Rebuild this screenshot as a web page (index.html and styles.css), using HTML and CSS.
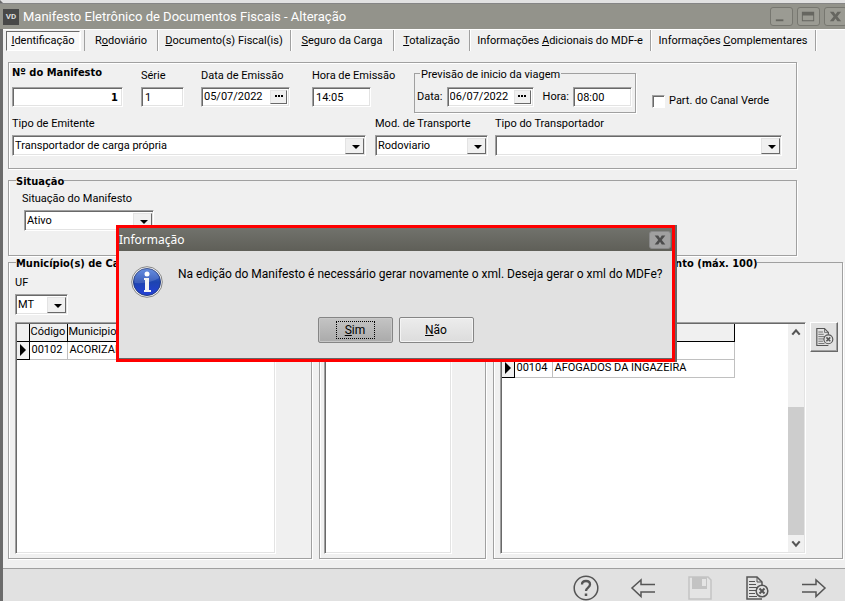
FILE: index.html
```html
<!DOCTYPE html>
<html lang="pt-BR">
<head>
<meta charset="utf-8">
<meta name="viewport" content="width=device-width, initial-scale=1">
<title>Manifesto Eletrônico de Documentos Fiscais</title>
<link rel="stylesheet" href="styles.css">
</head>
<body>
<svg class="defs" aria-hidden="true">
  <symbol id="doc-cancel" viewBox="0 0 24 26">
    <path d="M17 10V7l-5-5H2v22h15" fill="none" stroke="currentColor" stroke-width="1.500"/>
    <path d="M12 2v5h5" fill="none" stroke="currentColor" stroke-width="1"/>
    <path d="M4 6.500h6M4 9.500h7M4 12.500h9M4 15.500h7M4 18.500h6M4 21.500h8" stroke="currentColor" stroke-width="1"/>
    <circle cx="17" cy="16" r="5.800" fill="#e1e1e1" stroke="currentColor" stroke-width="1.500"/>
    <path d="M14.500 13.500l5 5m0-5l-5 5" stroke="currentColor" stroke-width="2"/>
  </symbol>
</svg>
<div class="window">
  <header class="titlebar">
    <span class="app-icon">VD</span>
    <h1>Manifesto Eletrônico de Documentos Fiscais - Alteração</h1>
    <div class="window-buttons">
      <button type="button" aria-label="Minimizar"><svg viewBox="0 0 22 18"><path d="M5 12h8v2H5z" fill="#666660"/></svg></button>
      <button type="button" aria-label="Maximizar"><svg viewBox="0 0 22 18"><path d="M4 4h13v10H4zM5 8v5h11V8z" fill="#666660" fill-rule="evenodd"/></svg></button>
      <button type="button" aria-label="Fechar"><svg viewBox="0 0 22 18"><path d="M5 4h4l2 3 2-3h4l-4 5 4 5h-4l-2-3-2 3H5l4-5z" fill="#666660"/></svg></button>
    </div>
  </header>

  <nav class="tabs" aria-label="Seções">
    <button type="button" class="tab selected"><u>I</u>dentificação</button>
    <button type="button" class="tab">R<u>o</u>doviário</button>
    <button type="button" class="tab"><u>D</u>ocumento(s) Fiscal(is)</button>
    <button type="button" class="tab"><u>S</u>eguro da Carga</button>
    <button type="button" class="tab"><u>T</u>otalização</button>
    <button type="button" class="tab">Informações <u>A</u>dicionais do MDF-e</button>
    <button type="button" class="tab">Informações <u>C</u>omplementares</button>
  </nav>

  <main>
    <section class="panel">
      <div class="row first">
        <div class="field number"><label class="strong" for="num">Nº do Manifesto</label><input class="box" id="num" value="1"></div>
        <div class="field serie"><label for="serie">Série</label><input class="box" id="serie" value="1"></div>
        <div class="field date-field"><label for="data">Data de Emissão</label>
          <span class="box date"><input id="data" value="05/07/2022"><button type="button" aria-label="Escolher data"><i></i></button></span></div>
        <div class="field hour-field"><label for="hora">Hora de Emissão</label><input class="box" id="hora" value="14:05"></div>
        <fieldset class="forecast">
          <legend>Previsão de inicio da viagem</legend>
          <label for="pdata">Data:</label>
          <span class="box date"><input id="pdata" value="06/07/2022"><button type="button" aria-label="Escolher data"><i></i></button></span>
          <label for="phora">Hora:</label>
          <input class="box" id="phora" value="08:00">
        </fieldset>
        <label class="check"><input type="checkbox">Part. do Canal Verde</label>
      </div>
      <div class="row second">
        <div class="field emitter"><label for="emit">Tipo de Emitente</label><span class="box combo"><select id="emit"><option>Transportador de carga própria</option></select></span></div>
        <div class="field mode"><label for="modo">Mod. de Transporte</label><span class="box combo"><select id="modo"><option>Rodoviario</option></select></span></div>
        <div class="field carrier"><label for="transp">Tipo do Transportador</label><span class="box combo"><select id="transp"><option></option></select></span></div>
      </div>
    </section>

    <fieldset class="group status">
      <legend>Situação</legend>
      <label for="sit">Situação do Manifesto</label>
      <span class="box combo"><select id="sit"><option>Ativo</option></select></span>
    </fieldset>

    <div class="cities">
      <fieldset class="group loading">
        <legend>Município(s) de Carga</legend>
        <label for="uf">UF</label>
        <span class="box combo"><select id="uf"><option>MT</option></select></span>
        <div class="box list">
          <table>
            <colgroup><col class="c-mark"><col class="c-code"><col class="c-name"></colgroup>
            <thead><tr><th></th><th>Código</th><th>Municipio</th></tr></thead>
            <tbody><tr><td class="mark current"></td><td>00102</td><td>ACORIZAL</td></tr></tbody>
          </table>
        </div>
      </fieldset>
      <section class="group route">
        <div class="box list"></div>
      </section>
      <fieldset class="group unloading">
        <legend>Município(s) de Descarregamento (máx. 100)</legend>
        <div class="unloading-body">
          <div class="box list">
            <table>
              <colgroup><col class="c-mark"><col class="c-code"><col class="c-name"></colgroup>
              <thead><tr><th></th><th>Código</th><th>Municipio</th></tr></thead>
              <tbody>
                <tr><td class="mark"></td><td>00103</td><td>AFRANIO</td></tr>
                <tr><td class="mark current"></td><td>00104</td><td>AFOGADOS DA INGAZEIRA</td></tr>
              </tbody>
            </table>
            <div class="scroll" aria-hidden="true">
              <svg viewBox="0 0 15 16"><path d="M4 10l3.500-4 3.500 4" fill="none" stroke="#555" stroke-width="2"/></svg>
              <div class="track"><span class="thumb"></span></div>
              <svg viewBox="0 0 15 16"><path d="M4 6l3.500 4 3.500-4" fill="none" stroke="#555" stroke-width="2"/></svg>
            </div>
          </div>
          <button type="button" class="remove" aria-label="Excluir município"><svg><use href="#doc-cancel"/></svg></button>
        </div>
      </fieldset>
    </div>
  </main>

  <footer class="toolbar">
    <button type="button" aria-label="Ajuda"><svg viewBox="0 0 26 26" fill="none" stroke="currentColor"><circle cx="13" cy="13" r="11.800" stroke-width="1.500"/><path d="M9 9.500C9 7 10.800 6 13 6s4 1.300 4 3.500c0 3-4 3.200-4 6.500" stroke-width="2.300"/><path d="M13 18.500V21" stroke-width="2.500"/></svg></button>
    <button type="button" aria-label="Anterior"><svg viewBox="0 0 26 26" fill="none" stroke="currentColor" stroke-width="1.500"><path d="M25 9.500H11V5L2 13l9 8.500V17h14"/></svg></button>
    <button type="button" aria-label="Salvar" disabled><svg viewBox="0 0 26 26"><path d="M2 2h19l3 3v19H2z" fill="#e4e4e4" stroke="#c3c3c3" stroke-width="1.500"/><path d="M5 2h15v12H5z" fill="#c3c3c3"/><path d="M15 4h4v7h-4z" fill="#e4e4e4"/></svg></button>
    <button type="button" aria-label="Cancelar"><svg><use href="#doc-cancel"/></svg></button>
    <button type="button" aria-label="Próximo"><svg viewBox="0 0 26 26" fill="none" stroke="currentColor" stroke-width="1.500"><path d="M1 9.500h14V5l9 8-9 8.500V17H1"/></svg></button>
  </footer>
</div>

<div class="dialog" role="dialog" aria-labelledby="dlg-title">
  <div class="dialog-title">
    <h2 id="dlg-title">Informação</h2>
    <button type="button" aria-label="Fechar"><svg viewBox="0 0 22 18"><path d="M5 4h4l2 3 2-3h4l-4 5 4 5h-4l-2-3-2 3H5l4-5z" fill="#4c4c4c"/></svg></button>
  </div>
  <div class="dialog-message">
    <svg class="info" viewBox="0 0 32 32">
      <defs><linearGradient id="blue" x1="0" y1="0" x2="0" y2="1"><stop offset="0" stop-color="#4d7cdc"/><stop offset=".5" stop-color="#1d44b0"/><stop offset="1" stop-color="#2440d8"/></linearGradient></defs>
      <circle cx="16" cy="16" r="15.300" fill="#f4f4f4" stroke="#858585"/>
      <circle cx="16" cy="16" r="13.500" fill="url(#blue)" stroke="#253c80"/>
      <path d="M3.500 17A12.500 12.500 0 0 1 28 12Q19 18 3.500 17z" fill="#fff" opacity=".15"/>
      <circle cx="16" cy="8" r="2.500" fill="#fff"/>
      <path d="M13 12h5v12h2v2h-7v-2h1V14h-1z" fill="#f4f4f4"/>
    </svg>
    <p>Na edição do Manifesto é necessário gerar novamente o xml. Deseja gerar o xml do MDFe?</p>
  </div>
  <div class="dialog-actions">
    <button type="button" class="default"><span><u>S</u>im</span></button>
    <button type="button"><span><u>N</u>ão</span></button>
  </div>
</div>
</body>
</html>
```
FILE: styles.css
```css
* { box-sizing: border-box; }
body {
  margin: 0;
  background: #f0f0f0;
  color: #000;
  font: 11px/14px Roboto, "Noto Sans", sans-serif;
}
button, input, select { font: inherit; color: inherit; margin: 0; padding: 0; border: 0; border-radius: 0; }
fieldset { margin: 0; padding: 0; border: 0; min-width: 0; }
u { text-underline-offset: 1px; }
.defs { position: absolute; width: 0; height: 0; }

.window {
  display: flex;
  flex-direction: column;
  min-height: 100vh;
  border-top: 3px solid #e1e1e1;
  border-left: 3px solid #6b6b6b;
}
.titlebar {
  display: flex;
  align-items: center;
  height: 26px;
  margin-left: -3px;
  padding-left: 3px;
  background: #93938b;
  border-top: 1px solid #858585;
}
.app-icon {
  width: 16px;
  height: 16px;
  background: #484848;
  color: #ddd;
  font-size: 8px;
  font-weight: bold;
  line-height: 16px;
  text-align: center;
}
.titlebar h1 { flex: 1; margin: 0 0 0 4px; color: #fff; font-size: 13px; font-weight: normal; line-height: 20px; white-space: nowrap; }
.window-buttons { display: flex; gap: 4px; margin-right: -2px; }
.window-buttons button {
  width: 23px;
  height: 19px;
  background: #9b9b93;
  border: 1px solid #777770;
  border-radius: 3px;
}
.window-buttons svg, .dialog-title svg { display: block; width: 100%; height: 100%; }

.tabs {
  display: grid;
  grid-template-columns: 79px 73px 133px 103px 76px 181px 165px;
  height: 22px;
  padding-left: 3px;
  border-top: 1px solid #fff;
}
.tab { background: none; border-right: 1px solid #a0a0a0; box-shadow: 1px 0 #fff; line-height: 20px; white-space: nowrap; }
.tab.selected {
  height: 20px;
  margin: 1px 5px 0 0;
  background: #f8f8f8;
  border: 1px solid #fff;
  border-top-color: #696969;
  border-left-color: #696969;
  line-height: 18px;
}
.tab.selected + .tab { border-left: 1px solid #a0a0a0; margin-left: -1px; }

main { display: flex; flex-direction: column; flex: 1; padding: 11px 2px 9px 5px; }

.box {
  display: flex;
  background: #fff;
  border: 1px solid;
  border-color: #a0a0a0 #fff #fff #a0a0a0;
  box-shadow: inset 1px 1px #696969, inset -1px -1px #e3e3e3;
  padding: 2px;
}
input.box { width: 100%; height: 20px; padding: 0 4px 0 3px; }
.date { height: 20px; }
.date input { flex: 1; width: 0; background: none; }
.date button, .combo::before {
  width: 17px;
  background: #f0f0f0;
  border: 1px solid;
  border-color: #e3e3e3 #696969 #696969 #e3e3e3;
}
.date i { display: block; width: 8px; height: 2px; margin: -2px auto 0; background: repeating-linear-gradient(90deg, #000 0 2px, transparent 2px 3px); }
.combo { position: relative; height: 21px; }
.combo select { flex: 1; width: 0; padding: 0 18px 0 0; appearance: none; background: none; outline: 0; }
.combo::before { content: ""; position: absolute; top: 2px; right: 1px; bottom: 1px; pointer-events: none; }
.combo::after { content: ""; position: absolute; top: 9px; right: 5px; border: 4px solid transparent; border-top-color: #000; border-bottom: 0; pointer-events: none; }

.panel {
  margin-right: 46px;
  padding: 3px 14px 12px 3px;
  border: 1px solid #a0a0a0;
  box-shadow: 1px 1px #fff, inset 1px 1px #fff;
}
.row { display: flex; }
.field { display: flex; flex-direction: column; justify-content: flex-end; white-space: nowrap; }
.first { height: 48px; align-items: flex-start; }
.first .field { height: 41px; }
.first .field label { margin-bottom: 4px; }
.first .field label.strong { margin-bottom: 7px; }
.strong, .number input, .group legend { font-family: "DejaVu Sans Condensed", "DejaVu Sans", sans-serif; font-weight: bold; }
.number { width: 111px; margin-right: 18px; }
.number input { text-align: right; }
.serie { width: 43px; margin-right: 17px; }
.date-field { width: 89px; margin-right: 22px; }
.hour-field { width: 59px; margin-right: 43px; }
.hour-field label { width: max-content; }
.forecast {
  display: flex;
  align-items: center;
  width: 222px;
  height: 48px;
  margin-top: -1px;
  padding: 1px 3px 0 2px;
  border: 1px solid #a0a0a0;
  box-shadow: 1px 1px #fff;
}
.forecast legend { margin-left: 3px; padding: 4px 1px 0; line-height: 12px; }
.forecast .date { width: 87px; margin: 0 9px 0 auto; }
.forecast input.box { width: 59px; margin-left: auto; }
.check { display: flex; align-items: center; margin: 28px 0 0 16px; white-space: nowrap; }
.check input {
  appearance: none;
  width: 13px;
  height: 13px;
  margin-right: 4px;
  background: #fff;
  border: 1px solid;
  border-color: #a0a0a0 #fff #fff #a0a0a0;
  box-shadow: inset 1px 1px #696969;
}
.second { padding-top: 3px; }
.second label { margin-bottom: 4px; }
.emitter { width: 354px; margin-right: 9px; }
.mode { width: 113px; margin-right: 7px; }
.carrier { flex: 1; }

.group { border: 1px solid #a0a0a0; box-shadow: 1px 1px #fff, inset 1px 0 #fff; }
.group legend { margin-left: 7px; padding: 4px 0 0; line-height: 12px; white-space: nowrap; }
.status { height: 84px; margin: 3px 46px 0 0; padding-top: 4px; }
.status label { display: block; margin-left: 13px; }
.status .combo { width: 130px; margin: 4px 0 0 15px; }

.cities {
  display: grid;
  grid-template-columns: 304fr 167fr 350fr;
  gap: 7px;
  flex: 1;
  margin-top: -2px;
}
.cities .group { display: flex; flex-direction: column; padding-bottom: 4px; }
.list { flex: 1; align-items: flex-start; overflow: hidden; padding: 1px; }
.loading { padding-top: 6px; }
.loading label { margin-left: 6px; }
.loading .combo { width: 53px; margin: 4px 0 7px 6px; }
.loading .list { margin: 0 35px 0 6px; }
.route { margin-top: 8px; }
.route .list { margin: 59px 33px 0 4px; }
.unloading legend { margin-left: 11px; }
.unloading-body { display: flex; flex: 1; align-items: flex-start; gap: 4px; padding: 52px 4px 0 6px; }
.unloading .list { align-self: stretch; justify-content: space-between; }
.remove {
  width: 28px;
  height: 30px;
  padding: 4px;
  background: #e1e1e1;
  border: 1px solid;
  border-color: #fff #696969 #696969 #fff;
  box-shadow: inset -1px -1px #a0a0a0;
  color: #555;
}
.remove svg { display: block; width: 19px; height: 20px; }

table { border-collapse: collapse; table-layout: fixed; }
.c-mark { width: 12px; }
.c-code { width: 38px; }
.loading table { width: 220px; }
.unloading table { width: 233px; }
th, td { height: 18px; padding: 0 2px; border: 1px solid #c0c0c0; border-top: 0; border-left: 0; text-align: left; font-weight: normal; white-space: nowrap; }
th { height: 17px; background: #f0f0f0; border-color: #000; padding: 0 1px; }
td.mark { padding: 0; background: #f0f0f0; border-color: #000; }
.current::before { content: ""; display: block; width: 0; margin-left: 3px; border: 6px solid transparent; border-left-color: #000; border-right: 0; }
.scroll { display: flex; flex-direction: column; align-self: stretch; width: 16px; background: #f0f0f0; }
.scroll svg { width: 16px; height: 17px; }
.track { display: flex; flex-direction: column; justify-content: flex-end; flex: 1; }
.thumb { height: 66%; background: #cdcdcd; }

.toolbar {
  display: flex;
  justify-content: flex-end;
  gap: 31px;
  height: 33px;
  padding: 6px 18px 0 0;
  background: #e1e1e1;
  border-top: 1px solid #a0a0a0;
}
.toolbar button { width: 26px; height: 26px; background: none; color: #555; }
.toolbar svg { display: block; width: 26px; height: 26px; }

.dialog {
  position: absolute;
  top: 225px;
  left: 116px;
  width: 559px;
  background: #e1e1e1;
  border: 3px solid #f00;
  box-shadow: 2px 0 #666;
}
.dialog-title {
  display: flex;
  align-items: center;
  justify-content: space-between;
  height: 23px;
  padding-right: 1px;
  background: linear-gradient(#71726c, #5f5f58);
}
.dialog-title h2 { margin: 0; color: #fff; font: 12px/16px "Noto Sans", sans-serif; }
.dialog-title button { width: 22px; height: 18px; background: #a0a0a0; border: 1px solid #888; border-radius: 3px; }
.dialog-message { display: flex; align-items: flex-start; gap: 15px; padding: 15px 12px 0; }
.info { flex: none; width: 32px; height: 32px; }
.dialog-message p { margin: 0; font-size: 12px; line-height: 16px; white-space: nowrap; }
.dialog-actions { display: flex; justify-content: center; gap: 6px; padding: 19px 0 15px; border-bottom: 1px solid #666; }
.dialog-actions button {
  width: 75px;
  height: 26px;
  background: linear-gradient(#ececec, #dcdcdc);
  border: 1px solid #858585;
  border-radius: 2px;
  box-shadow: inset 0 0 0 1px #f4f4f4;
  font-size: 12px;
}
.dialog-actions span { display: inline-block; width: 37px; line-height: 16px; }
.dialog-actions .default { background: linear-gradient(#c4c4c4, #aaa); box-shadow: inset 0 0 0 1px #c8c8c8; }
.default span { outline: 1px dotted #000; }
```
